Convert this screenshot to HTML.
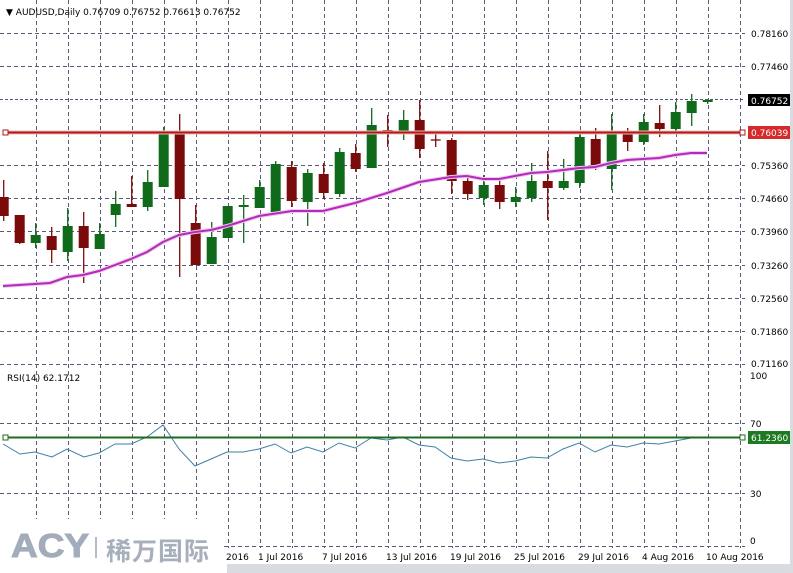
<!DOCTYPE html>
<html><head><meta charset="utf-8">
<style>
html,body{margin:0;padding:0;background:#fff;width:793px;height:573px;overflow:hidden}
svg{display:block}
text{font-family:"DejaVu Sans","Liberation Sans",sans-serif;font-size:9px;fill:#000}
.logo{position:absolute;left:0;top:519px;width:224px;height:54px;background:#fff}
.acy{position:absolute;left:11px;top:527px;font:900 33px "Liberation Sans",sans-serif;color:#a3acba;letter-spacing:0px;transform:scaleX(1.12);transform-origin:left top;-webkit-text-stroke:1px #a3acba}
.bar{position:absolute;left:95px;top:537px;width:2px;height:21px;background:#b5bcc8}
.cn{position:absolute;left:106px;top:532px;font:bold 25px "Noto Sans CJK SC",sans-serif;color:#a7afbd;letter-spacing:1px}
</style></head><body>
<svg id="s" width="793" height="573" xmlns="http://www.w3.org/2000/svg">
<rect x="0" y="0" width="793" height="573" fill="#fff"/>
<g id="grid"></g>
<g id="cd"></g>
<polyline fill="none" stroke="#f3c6f3" stroke-width="4" points="3,286 50,283 67,277 83,275 99,271 115,265 131,259 147,252 163,242 179,235 195,232 211,230 227,226 243,221 259,216 292,211 323,211 355,203 387,193 419,182 451,177 467,176 483,179 499,179 515,176 531,173 547,172 563,170 579,168 595,167 611,163 627,160 643,159 659,158 675,155 691,153 707,153"/>
<polyline fill="none" stroke="#b12cb8" stroke-width="2" points="3,286 50,283 67,277 83,275 99,271 115,265 131,259 147,252 163,242 179,235 195,232 211,230 227,226 243,221 259,216 292,211 323,211 355,203 387,193 419,182 451,177 467,176 483,179 499,179 515,176 531,173 547,172 563,170 579,168 595,167 611,163 627,160 643,159 659,158 675,155 691,153 707,153"/>
<line x1="0" y1="99.5" x2="745" y2="99.5" stroke="#55557a" stroke-dasharray="3,2"/>
<line x1="5" y1="132.5" x2="745" y2="132.5" stroke="#f2b8b8" stroke-width="4"/>
<line x1="5" y1="132.5" x2="745" y2="132.5" stroke="#b01818" stroke-width="2"/>
<rect x="3" y="130" width="5" height="5" fill="#fff" stroke="#b01818"/>
<rect x="740" y="130" width="5" height="5" fill="#fff" stroke="#b01818"/>
<rect x="748" y="94" width="43" height="12" fill="#000"/>
<text x="751" y="104" style="fill:#fff">0.76752</text>
<rect x="748" y="126" width="43" height="13" fill="#d42a2a"/>
<text x="751" y="136" style="fill:#fff">0.76039</text>
<polyline fill="none" stroke="#3f7fa3" stroke-width="1" points="3,444 20,454 35,452 52,457 67,449 84,457 99,453 115,444 131,444 147,437 163,425 179,449 195,466 211,459 227,452 243,452 259,449 275,444 291,453 307,447 323,452 339,443 355,448 371,438 387,440 403,437 419,445 435,447 451,458 467,461 483,459 499,463 515,461 531,457 547,458 563,449 579,443 595,452 611,445 627,447 643,443 659,444 675,441 691,438 707,437"/>
<line x1="5" y1="437.5" x2="745" y2="437.5" stroke="#1d6b1d" stroke-width="2"/>
<rect x="3" y="435" width="5" height="5" fill="#fff" stroke="#1d6b1d"/>
<rect x="740" y="435" width="5" height="5" fill="#fff" stroke="#1d6b1d"/>
<rect x="748" y="431" width="43" height="13" fill="#1e7a22"/>
<text x="751" y="441" style="fill:#fff">61.2360</text>
<text x="6" y="15">▼ AUDUSD,Daily  0.76709 0.76752 0.76613 0.76752</text>
<text x="751" y="37">0.78160</text>
<text x="751" y="70">0.77460</text>
<text x="751" y="169">0.75360</text>
<text x="751" y="202">0.74660</text>
<text x="751" y="235">0.73960</text>
<text x="751" y="269">0.73260</text>
<text x="751" y="302">0.72560</text>
<text x="751" y="335">0.71860</text>
<text x="751" y="367">0.71160</text>
<text x="750" y="379">100</text>
<text x="750" y="427">70</text>
<text x="750" y="497">30</text>
<text x="750" y="544">0</text>
<text x="7" y="381">RSI(14) 62.1712</text>
<text x="226" y="560">2016</text>
<text x="258" y="560">1 Jul 2016</text>
<text x="322" y="560">7 Jul 2016</text>
<text x="386" y="560">13 Jul 2016</text>
<text x="450" y="560">19 Jul 2016</text>
<text x="514" y="560">25 Jul 2016</text>
<text x="578" y="560">29 Jul 2016</text>
<text x="642" y="560">4 Aug 2016</text>
<text x="706" y="560">10 Aug 2016</text>
<rect x="227" y="564" width="566" height="9" fill="#d8dbe0"/>
<rect x="790" y="0" width="3" height="573" fill="#d8dbe0"/>
</svg>
<div class="logo"></div>
<div class="acy">ACY</div><div class="bar"></div>
<div class="cn">稀万国际</div>
<script>
var NS="http://www.w3.org/2000/svg";
function el(p,t,a){var e=document.createElementNS(NS,t);for(var k in a)e.setAttribute(k,a[k]);p.appendChild(e);return e;}
var g=document.getElementById("grid");
for(var k=0;k<23;k++){var x=Math.round(35.7+32*k)+0.5;el(g,"line",{x1:x,y1:0,x2:x,y2:548,stroke:"#5a5a78","stroke-dasharray":"4,3"});}
[33,66,165,198,231,265,298,331,364,423,493,546].forEach(function(y){el(g,"line",{x1:0,y1:y+0.5,x2:745,y2:y+0.5,stroke:"#5a5a78","stroke-dasharray":"4,3"});});
var C=[[197,216,180,221],[215,243,215,244],[243,235,223,248],[236,250,227,263],[252,226,208,261],[226,248,212,283],[249,234,223,249],[215,204,191,227],[204,207,176,207],[207,182,170,211],[187,131,127,187],[132,199,114,277],[223,265,205,265],[264,237,222,264],[238,206,206,238],[207,205,195,243],[208,187,180,208],[212,164,161,212],[167,201,161,207],[202,173,169,226],[174,193,163,199],[194,152,148,197],[153,169,144,172],[168,125,108,168],[130,133,115,147],[134,120,110,140],[120,149,100,158],[140,140,133,147],[140,181,138,194],[181,194,175,200],[198,185,175,205],[185,202,180,209],[202,197,187,207],[198,181,163,202],[181,188,151,220],[188,181,159,190],[183,137,132,188],[139,167,128,170],[169,131,114,190],[131,142,128,151],[142,122,114,145],[123,129,105,137],[129,112,102,133],[113,101,94,126],[102,100,99,104]];
var cg=document.getElementById("cd");
C.forEach(function(c,i){var x=3.7+16*i;var bull=c[1]<c[0];var col=bull?"#0f6a1a":"#7b0b0b";
el(cg,"line",{x1:x,y1:c[2],x2:x,y2:c[3],stroke:col,"stroke-width":1.3});
var t=Math.min(c[0],c[1]),h=Math.max(Math.abs(c[0]-c[1]),1.5);
if(i==27){el(cg,"line",{x1:x-5,y1:c[0],x2:x+5,y2:c[0],stroke:col,"stroke-width":1.3});}
else el(cg,"rect",{x:x-5,y:t,width:10,height:h,fill:col});});
</script>
</body></html>
